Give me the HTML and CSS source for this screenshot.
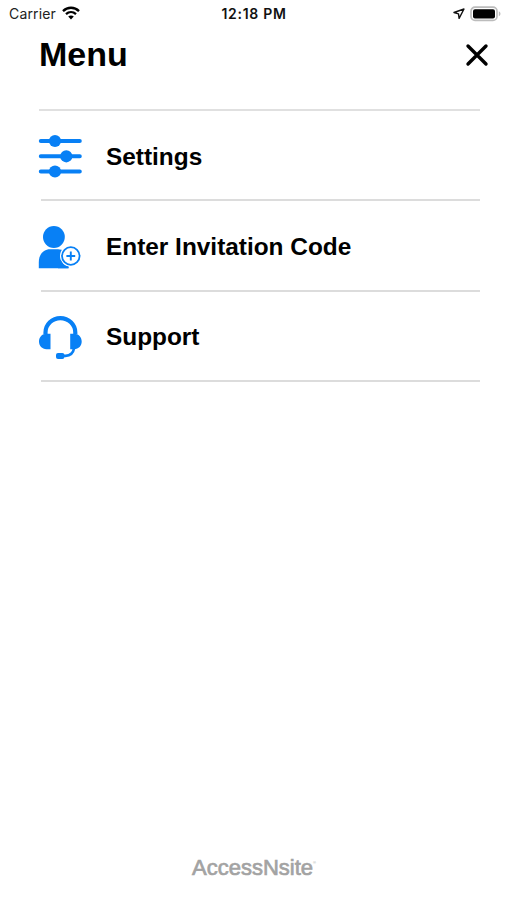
FILE: index.html
```
<!DOCTYPE html>
<html lang="en">
<head>
<meta charset="utf-8">
<title>Menu</title>
<link rel="stylesheet" href="styles.css">
</head>
<body>
<div class="screen">
    <div class="status">
        <div class="carrier">
            <span>Carrier</span>
            <svg class="wifi" width="18" height="14" viewBox="0 0 18 14" fill="none" stroke="#000" stroke-width="2.3">
                <path d="M1 5.1C5.500 .6 12.500 .6 17 5.100"/>
                <path d="M4 8.200c2.900-2.700 7.100-2.700 10 0"/>
                <path d="M6.200 10.600c1.600-1.400 4-1.400 5.600 0L9 13.600z" fill="#000" stroke="none"/>
            </svg>
        </div>
        <div class="time">12:18 PM</div>
        <div class="indicators">
            <svg width="12" height="12" viewBox="0 0 12 12" fill="none" stroke="#111" stroke-width="1.4" stroke-linejoin="round">
                <path d="M11 1L1 4.500l4.500 1.300.6 4.600z"/>
            </svg>
            <svg width="32" height="16" viewBox="0 0 32 16">
                <rect x="1" y="1.2" width="26" height="13.2" rx="4" fill="#fff" stroke="#bcbcbc" stroke-width="1.7"/>
                <rect x="3" y="3.2" width="22" height="9.2" rx="2" fill="#000"/>
                <path d="M28.800 5.300c2.200 1 2.200 4 0 5z" fill="#bcbcbc"/>
            </svg>
        </div>
    </div>

    <div class="header">
        <h1>Menu</h1>
        <button class="close" aria-label="Close">
            <svg width="24" height="24" viewBox="0 0 24 24" stroke="#000" stroke-width="3.4" stroke-linecap="round">
                <path d="M3 3l18 18M21 3L3 21"/>
            </svg>
        </button>
    </div>

    <ul class="menu">
        <li>
            <svg class="icon" width="44" height="44" viewBox="0 0 44 44" fill="#0880f5">
                <path d="M2.800 7h39M2.800 22.300h39M2.800 37.500h39" stroke="#0880f5" stroke-width="4" stroke-linecap="round"/>
                <circle cx="17" cy="7" r="6.1"/>
                <circle cx="28.3" cy="22.3" r="6.1"/>
                <circle cx="17" cy="37.5" r="6.1"/>
            </svg>
            <span>Settings</span>
        </li>
        <li>
            <svg class="icon" width="44" height="44" viewBox="0 0 44 44" fill="#0880f5">
                <circle cx="15.9" cy="12" r="10.9"/>
                <path d="M.8 43.300V37C.8 29 6 24.300 12 24.300h8c5 0 9 3 10.500 7v12z"/>
                <circle cx="32.8" cy="31" r="10.8" fill="#fff"/>
                <path d="M23 35c1.500 4.500 4.500 6 7.500 6.500v1.800H20V35z"/>
                <circle cx="32.8" cy="31" r="8.8" fill="#fff" stroke="#0880f5" stroke-width="1.8"/>
                <path d="M32.800 26.600v8.800M28.400 31h8.800" stroke="#0880f5" stroke-width="1.9"/>
            </svg>
            <span>Enter Invitation Code</span>
        </li>
        <li>
            <svg class="icon" width="44" height="44" viewBox="0 0 44 44" fill="#0880f5">
                <path d="M7.500 19v-1.500a14.900 14.400 0 0 1 29.800 0V19" fill="none" stroke="#0880f5" stroke-width="4.200"/>
                <path d="M12.500 18.700v15.500H8.500C4 34.200 1 31 1 26.600c0-4.500 3-7.900 7.500-7.900zM32.200 18.700v15.500h4c4.500 0 7.500-3.200 7.500-7.600 0-4.500-3-7.900-7.500-7.900z"/>
                <path d="M36 33.500c-.8 4.500-4 7.200-8.500 7.400H25" fill="none" stroke="#0880f5" stroke-width="2.600"/>
                <rect x="18" y="38" width="8.400" height="6" rx="2"/>
            </svg>
            <span>Support</span>
        </li>
    </ul>

    <div class="brand">AccessNsite<sup>®</sup></div>
</div>
</body>
</html>
```
FILE: styles.css
```
* {
    box-sizing: border-box;
}
body {
    margin: 0;
    background: #fff;
    color: #000;
    font-family: "Liberation Sans", Arial, sans-serif;
}
svg {
    display: block;
    flex: none;
    overflow: visible;
}
.screen {
    display: flex;
    flex-direction: column;
    height: 900px;
}
.status {
    display: grid;
    grid-template-columns: 1fr auto 1fr;
    align-items: center;
    height: 27px;
    padding: 0 5px 0 9px;
    font-family: Inter, sans-serif;
    font-size: 14px;
}
.carrier {
    display: flex;
    align-items: center;
    gap: 6px;
    color: #222;
    letter-spacing: 0.15px;
}
.wifi {
    margin-top: -2px;
}
.time {
    font-weight: 600;
    letter-spacing: 0.7px;
    color: #111;
    margin-right: 3px;
}
.indicators {
    display: flex;
    align-items: center;
    justify-content: flex-end;
    gap: 5px;
}
.header {
    display: flex;
    align-items: center;
    justify-content: space-between;
    height: 56px;
    padding: 0 18px 0 39px;
}
h1 {
    margin: 0 0 2px;
    font-size: 34px;
    line-height: 40px;
}
.close {
    padding: 0;
    border: 0;
    background: none;
}
.menu {
    margin: 26px 27px 0 39px;
    padding: 0;
    border-top: 2px solid #e0e0e0;
    list-style: none;
}
.menu li {
    display: flex;
    align-items: center;
    gap: 24px;
    height: 90.4px;
    font-size: 24.4px;
    font-weight: bold;
    background: linear-gradient(#dcdcdc, #dcdcdc) 2px 100% / 100% 2px no-repeat;
}
.menu .icon {
    margin-left: -1px;
}
.menu span {
    padding-top: 1px;
}
.brand {
    margin-top: auto;
    padding: 0 0 20px 1px;
    text-align: center;
    color: #a3a3a3;
    font-size: 22px;
    line-height: 25px;
    -webkit-text-stroke: 0.7px #a3a3a3;
}
.brand sup {
    font-size: 4px;
    line-height: 0;
    vertical-align: 11px;
    -webkit-text-stroke: 0;
}
```
